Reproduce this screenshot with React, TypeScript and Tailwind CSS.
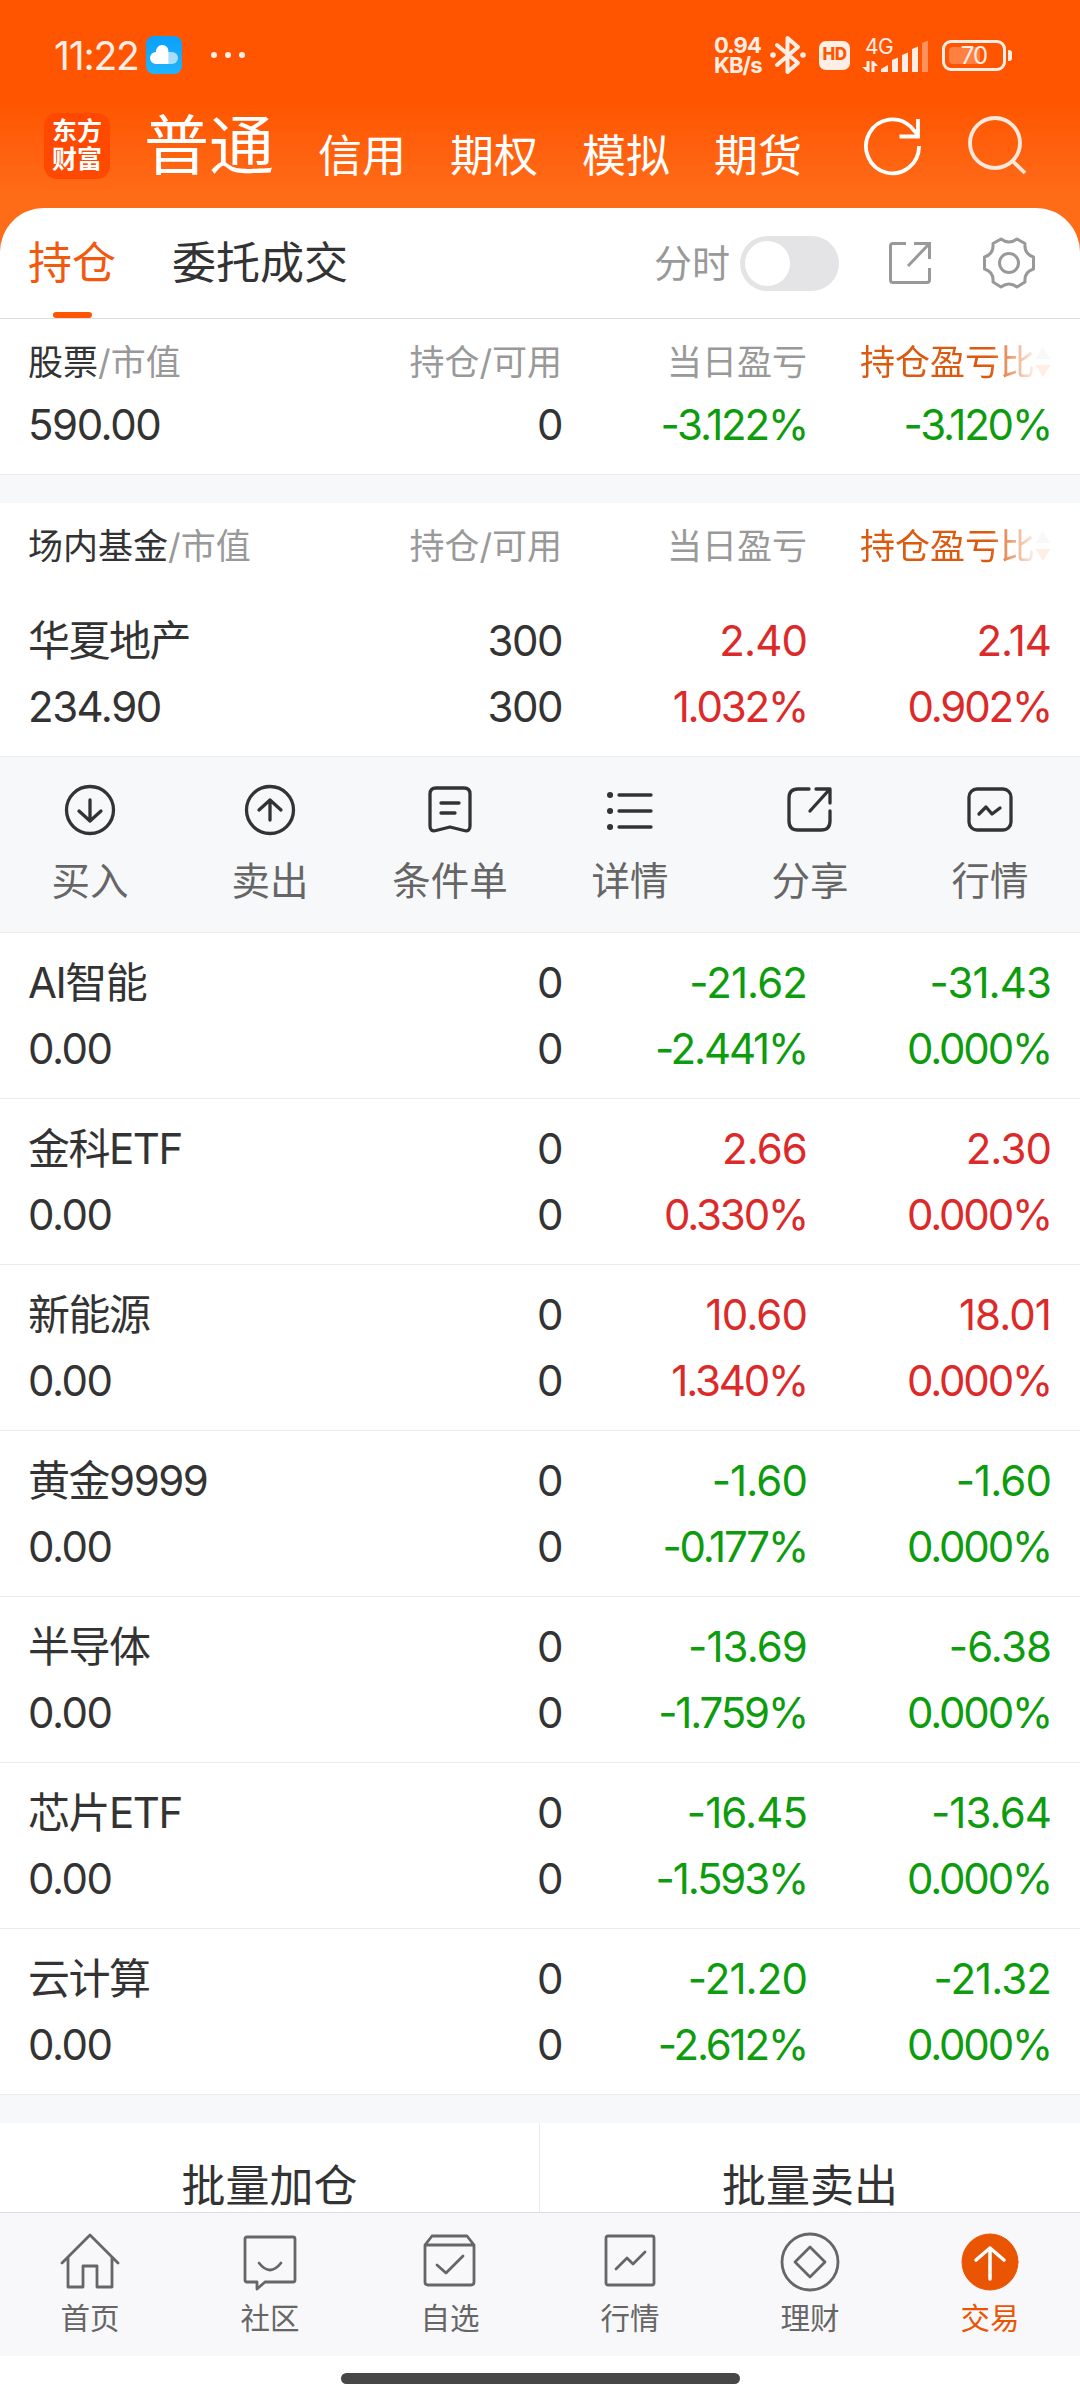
import React from "react";

const GREEN = "text-[#0d9c0d]";
const RED = "text-[#dc2a2a]";

const holdings = [
  { name: "AI智能", day: "-21.62", dayRate: "-2.441%", total: "-31.43", up: false },
  { name: "金科ETF", day: "2.66", dayRate: "0.330%", total: "2.30", up: true },
  { name: "新能源", day: "10.60", dayRate: "1.340%", total: "18.01", up: true },
  { name: "黄金9999", day: "-1.60", dayRate: "-0.177%", total: "-1.60", up: false },
  { name: "半导体", day: "-13.69", dayRate: "-1.759%", total: "-6.38", up: false },
  { name: "芯片ETF", day: "-16.45", dayRate: "-1.593%", total: "-13.64", up: false },
  { name: "云计算", day: "-21.20", dayRate: "-2.612%", total: "-21.32", up: false },
];

function Icon({ size, width = 2.6, className = "", children }: any) {
  return (
    <svg
      width={size}
      height={size}
      viewBox={`0 0 ${size} ${size}`}
      fill="none"
      stroke="currentColor"
      strokeWidth={width}
      strokeLinecap="round"
      strokeLinejoin="round"
      className={`shrink-0 ${className}`}
    >
      {children}
    </svg>
  );
}

function StatusBar() {
  return (
    <div className="h-[102px] pt-[8px] pl-[54px] pr-[68px] flex items-center text-[#ffeee5]">
      <span className="w-[92px] text-[39px] tracking-[-0.03em] leading-none">11:22</span>
      <svg width="36" height="38" viewBox="0 0 36 38">
        <defs>
          <linearGradient id="sky" x1="0" y1="0" x2="0" y2="1">
            <stop offset="0" stopColor="#0aa0fb" />
            <stop offset="1" stopColor="#22b4fc" />
          </linearGradient>
        </defs>
        <rect width="36" height="38" rx="8" fill="url(#sky)" />
        <path d="M22 16h4a6 6 0 0 1 0 12h-4z" fill="#a9dcfd" />
        <path d="M10 28a6 6 0 0 1 0-12 6.200 6.200 0 0 1 12.400-1.500V28z" fill="#fff" />
      </svg>
      <div className="ml-[29px] flex gap-2">
        <i className="size-1.5 rounded-full bg-current" />
        <i className="size-1.5 rounded-full bg-current" />
        <i className="size-1.5 rounded-full bg-current" />
      </div>
      <div className="ml-auto w-[50px] text-[22px] leading-[20px] font-bold tracking-[-0.04em]">
        <div>0.94</div>
        <div>KB/s</div>
      </div>
      <svg width="36" height="40" viewBox="0 0 36 40" className="ml-[6px]" fill="none" stroke="currentColor" strokeWidth="4" strokeLinejoin="round" strokeLinecap="round">
        <path d="M7 10l21 18-10.500 9V3L28 12 7 30" />
        <circle cx="3" cy="20" r="2.800" fill="currentColor" stroke="none" />
        <circle cx="33" cy="20" r="2.800" fill="currentColor" stroke="none" />
      </svg>
      <span className="ml-[13px] w-[31px] h-[29px] rounded-[7px] bg-[#ffeee5] text-[#ff5500] text-[17px] font-extrabold tracking-tight flex items-center justify-center">
        HD
      </span>
      <div className="relative ml-[12px] w-[67px] h-[35px]">
        <span className="absolute left-[3px] -top-[1px] text-[21px] leading-[20px] tracking-tight">4G</span>
        <svg width="67" height="35" viewBox="0 0 67 35" fill="currentColor" className="absolute">
          <path d="M4.500 23h3v11h-2L0 29h4.500zM9.500 34V23h2l4.500 5h-3.500v6z" />
          <path d="M19 34v-3l7-4v7zM30 34V22l6-2.500V34zM40 34V17l6-2.500V34zM50 34V11l6-2.500V34z" />
          <path d="M60 34V5l6-2.500V34z" opacity=".4" />
        </svg>
      </div>
      <div className="ml-[13px] w-[64px] h-[31px] rounded-[9px] border-[3px] border-current p-[4px] relative">
        <div className="h-full w-[31px] rounded-[4px] bg-[#ff8040]" />
        <span className="absolute inset-0 text-center text-[24px] leading-[25px] tracking-[-0.04em]">70</span>
      </div>
      <i className="ml-[2px] w-[4px] h-[11px] rounded-r-[3px] bg-current" />
    </div>
  );
}

function TopTabs() {
  return (
    <div className="h-[106px] pl-[44px] pr-[53px] flex items-start text-white">
      <div className="mt-[11px] size-[66px] rounded-[13px] bg-[#ff4800] font-bold text-[25px] leading-[28px] text-center pt-[4px]">
        <div>东方</div>
        <div>财富</div>
      </div>
      <div className="ml-[34px] flex items-start gap-[44px] text-[44px] leading-[109px]">
        <span className="text-[65px] leading-[88px]">普通</span>
        <span>信用</span>
        <span>期权</span>
        <span>模拟</span>
        <span>期货</span>
      </div>
      <Icon size={60} width={3.800} className="ml-auto mt-[14px]">
        <g strokeLinecap="butt" strokeLinejoin="miter">
          <path d="M56 30a26.500 27 0 1 1-8-19l6 7" />
          <path d="M55 3v17.500H36.500" />
        </g>
      </Icon>
      <Icon size={60} width={3.800} className="ml-[44px] mt-[14px] text-[#ffe9dd]">
        <circle cx="28" cy="27" r="25" />
        <path d="M45.500 45L58 57" strokeLinecap="butt" />
      </Icon>
    </div>
  );
}

function SubTabs() {
  return (
    <div className="h-[111px] pl-[28px] pr-[45px] flex items-center border-b border-[#dcdcdf] text-[44px]">
      <div className="relative h-full flex items-center text-[#f2590f]">
        持仓
        <i className="absolute bottom-0 left-[25px] w-[39px] h-[6px] rounded-full bg-[#ff5500]" />
      </div>
      <div className="ml-[56px] text-[#333]">委托成交</div>
      <div className="ml-auto text-[38px] text-[#999]">分时</div>
      <div className="ml-[10px] w-[99px] h-[55px] rounded-full bg-[#e4e4e7] p-[5px]">
        <div className="size-[45px] rounded-full bg-white" />
      </div>
      <Icon size={44} width={3} className="ml-[49px] text-[#999]">
        <path d="M18 2.500H5Q2.500 2.500 2.500 5V39Q2.500 41.500 5 41.500H39Q41.500 41.500 41.500 39V27" strokeLinecap="butt" />
        <path d="M26 2.500H41.500V18M41.500 2.500L20 25" strokeLinecap="butt" strokeLinejoin="miter" />
      </Icon>
      <Icon size={52} width={3} className="ml-[51px] text-[#999]">
        <circle cx="26" cy="26" r="9.500" />
        <path d="M18 2Q26 8 34 2L42 6.500Q41 17 50.500 20V32Q41 35 42 45L34 50Q26 44 18 50L10 45Q11 35 1.500 32V20Q11 17 10 6.500Z" />
      </Icon>
    </div>
  );
}

function TableHead({ title }: any) {
  return (
    <div className="h-[86px] grid grid-cols-[283px_251px_245px_244px] items-center px-[28px] text-[35px] text-[#999] text-right whitespace-nowrap">
      <div className="text-left">
        <span className="text-[#333]">{title}</span>/市值
      </div>
      <div>持仓/可用</div>
      <div>当日盈亏</div>
      <div className="flex justify-end items-center text-[#dc5a10] [mask-image:linear-gradient(to_right,#000_75%,rgba(0,0,0,0.1)_93%)]">
        <span>持仓盈亏比</span>
        <svg width="16" height="34" viewBox="0 0 16 34">
          <path d="M8 2l7.500 12H.5z" fill="#bbb" />
          <path d="M8 32L.5 20h15z" fill="#ff5500" />
        </svg>
      </div>
    </div>
  );
}

// rates carry a third decimal, so they are set tighter than amounts
function Value({ text }: any) {
  const tracking = text.endsWith("%") ? "tracking-[-0.052em]" : "tracking-[-0.022em]";
  return <span className={tracking}>{text}</span>;
}

function Line({ cells, color = "text-[#333]" }: any) {
  return (
    <div className="h-[66px] grid grid-cols-[283px_251px_245px_244px] items-center px-[28px] text-[42px] tracking-[-0.035em] text-[#333] text-right">
      <div className="text-left">{cells[0]}</div>
      <div>{cells[1]}</div>
      <div className={color}><Value text={cells[2]} /></div>
      <div className={color}><Value text={cells[3]} /></div>
    </div>
  );
}

function Actions() {
  const items = [
    { label: "买入", icon: <><circle cx="26" cy="26" r="23.500" /><path d="M26 16v21M15 27l11 10 11-10" /></> },
    { label: "卖出", icon: <><circle cx="26" cy="26" r="23.500" /><path d="M26 36V16M15 26l11-10 11 10" /></> },
    { label: "条件单", icon: <><path d="M12 4H40Q46 4 46 10V42Q46 48 40 46.500L26 43 12 46.500Q6 48 6 42V10Q6 4 12 4Z" /><path d="M17 19h18M17 29h14" /></> },
    { label: "详情", icon: <><path d="M15 11h32M15 27h32M15 43h32" /><path d="M6 11h.1M6 27h.1M6 43h.1" strokeWidth="6" /></> },
    { label: "分享", icon: <><path d="M25 5H14Q5 5 5 14V37Q5 46 14 46H37Q46 46 46 37V27" /><path d="M32 5H46V19M45 6L26 27" /></> },
    { label: "行情", icon: <><rect x="5" y="5" width="42" height="41" rx="8" /><path d="M15 30l7-7 6 7 8-6" /></> },
  ];
  return (
    <div className="h-[177px] border-y border-[#ebebed] bg-[#f7f8fa] grid grid-cols-6 text-[#333]">
      {items.map((item) => (
        <div key={item.label} className="flex flex-col items-center pt-[27px]">
          <Icon size={52} width={3.300}>{item.icon}</Icon>
          <span className="mt-[17px] text-[38.500px] leading-[56px] text-[#666]">{item.label}</span>
        </div>
      ))}
    </div>
  );
}

function BottomNav() {
  const items = [
    { label: "首页", icon: <path d="M2 31L30 3 58 31M8 26V55H23V34H37V55H52V26" /> },
    { label: "社区", icon: <><path d="M7 5H53Q55 5 55 7V48Q55 50 53 50H25L17 57V50H7Q5 50 5 48V7Q5 5 7 5Z" /><path d="M19 31Q30 45 41 31" /></> },
    { label: "自选", icon: <><path d="M5 13L12 4H47L54 13V50Q54 53 51 53H8Q5 53 5 50ZM5 13H54" /><path d="M17 33l9 8 17-17" /></> },
    { label: "行情", icon: <><rect x="6" y="4" width="48" height="49" rx="2" /><path d="M16 37l11-11 6 6 12-12" /></> },
    { label: "理财", icon: <><circle cx="30" cy="30" r="28" /><path d="M30 15L45 30 30 45 15 30Z" /></> },
    { label: "交易", icon: <><circle cx="30" cy="30" r="28" fill="currentColor" strokeWidth="1" /><path d="M30 47V16M16 28L30 16 44 28" stroke="#fff" strokeWidth="3.500" /></> },
  ];
  return (
    <div className="h-[144px] border-t border-[#dcdcdf] bg-[#f8f8fa] grid grid-cols-6">
      {items.map((item, i) => (
        <div key={item.label} className={`flex flex-col items-center pt-[19px] ${i === 5 ? "text-[#ea5504]" : "text-[#666]"}`}>
          <Icon size={60} width={2.800}>{item.icon}</Icon>
          <span className="mt-[6px] text-[29.500px] leading-[40px]">{item.label}</span>
        </div>
      ))}
    </div>
  );
}

function App() {
  return (
    <div className="w-[1080px] h-[2400px] overflow-hidden bg-white font-['Inter','Noto_Sans_CJK_SC',sans-serif]">
      <div className="h-[252px] -mb-[44px] bg-linear-to-b from-[#ff5500] from-[102px] to-[#ff6c18] to-[200px]">
        <StatusBar />
        <TopTabs />
      </div>
      <div className="rounded-t-[44px] bg-white">
        <SubTabs />
        <TableHead title="股票" />
        <div className="h-[69px] -mt-[15px] mb-[15px] flex flex-col justify-center">
          <Line cells={["590.00", "0", "-3.122%", "-3.120%"]} color={GREEN} />
        </div>
        <div className="h-[29px] border-t border-[#ebebed] bg-[#f7f8fa]" />
        <TableHead title="场内基金" />
        <div className="h-[167px] pt-[18px]">
          <Line cells={["华夏地产", "300", "2.40", "2.14"]} color={RED} />
          <Line cells={["234.90", "300", "1.032%", "0.902%"]} color={RED} />
        </div>
        <Actions />
        {holdings.map((item) => (
          <div key={item.name} className="h-[166px] pt-[16px] border-b border-[#ebebed]">
            <Line cells={[item.name, "0", item.day, item.total]} color={item.up ? RED : GREEN} />
            <Line cells={["0.00", "0", item.dayRate, "0.000%"]} color={item.up ? RED : GREEN} />
          </div>
        ))}
        <div className="h-[28px] bg-[#f7f8fa]" />
        <div className="h-[89px] overflow-hidden grid grid-cols-2 text-center text-[44px] leading-[127px] text-[#333]">
          <div className="border-r border-[#ebebed]">批量加仓</div>
          <div>批量卖出</div>
        </div>
      </div>
      <BottomNav />
      <div className="mt-[17px] mx-auto w-[399px] h-[11px] rounded-full bg-[#474747]" />
    </div>
  );
}

export default App;
